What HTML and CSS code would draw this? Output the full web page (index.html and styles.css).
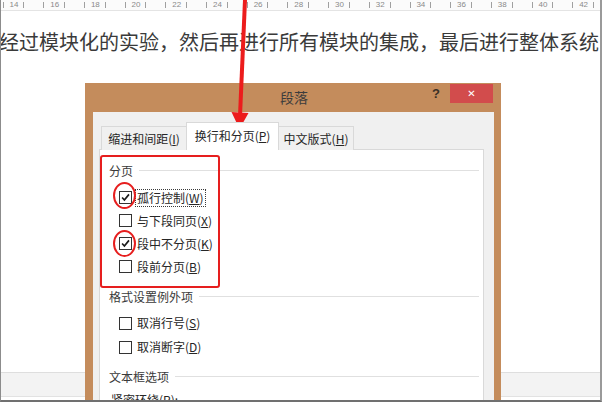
FILE: index.html
```html
<!DOCTYPE html>
<html lang="zh-CN">
<head>
<meta charset="utf-8">
<title>段落</title>
<link rel="stylesheet" href="styles.css">
</head>
<body>
<div class="screen">
  <div class="ruler">
    <div class="ruler-track">
      <span class="mark">14</span><span class="mark">16</span><span class="mark">18</span><span class="mark">20</span><span class="mark">22</span><span class="mark">24</span><span class="mark">26</span><span class="mark">28</span><span class="mark">30</span><span class="mark">32</span><span class="mark">34</span><span class="mark">36</span><span class="mark">38</span><span class="mark">40</span><span class="mark">42</span>
    </div>
  </div>
  <p class="doc-line">经过模块化的实验，然后再进行所有模块的集成，最后进行整体系统</p>
  <div class="doc-spacer"></div>
  <div class="status-band"></div>
  <div class="status-gap"></div>

  <div class="dialog">
    <div class="titlebar">
      <span></span>
      <span class="title">段落</span>
      <span class="controls"><span class="help">?</span><span class="close">✕</span></span>
    </div>
    <div class="client">
      <div class="tabs">
        <div class="tab t1">缩进和间距(<u>I</u>)</div>
        <div class="tab t2 active">换行和分页(<u>P</u>)</div>
        <div class="tab t3">中文版式(<u>H</u>)</div>
      </div>
      <div class="panel">
        <div class="section s1">
          <div class="sec-head"><span>分页</span><i class="rule"></i></div>
          <div class="row"><span class="box"><svg viewBox="0 0 13 13" class="tick"><path d="M2.5 6.5 L5.2 9.4 L10.6 2.8"/></svg></span><span class="lbl focus">孤行控制(<u>W</u>)</span></div>
          <div class="row"><span class="box"></span><span class="lbl">与下段同页(<u>X</u>)</span></div>
          <div class="row"><span class="box"><svg viewBox="0 0 13 13" class="tick"><path d="M2.5 6.5 L5.2 9.4 L10.6 2.8"/></svg></span><span class="lbl">段中不分页(<u>K</u>)</span></div>
          <div class="row"><span class="box"></span><span class="lbl">段前分页(<u>B</u>)</span></div>
        </div>
        <div class="section s2">
          <div class="sec-head"><span>格式设置例外项</span><i class="rule"></i></div>
          <div class="row tall"><span class="box"></span><span class="lbl">取消行号(<u>S</u>)</span></div>
          <div class="row tall"><span class="box"></span><span class="lbl">取消断字(<u>D</u>)</span></div>
        </div>
        <div class="section s3">
          <div class="sec-head"><span>文本框选项</span><i class="rule"></i></div>
          <div class="row sub"><span class="lbl">紧密环绕(<u>R</u>):</span></div>
        </div>
      </div>
    </div>
  </div>

  <div class="mark-rect"></div>
  <div class="mark-ring r1"></div>
  <div class="mark-ring r2"></div>
  <svg class="arrow" viewBox="0 0 602 402" width="602" height="402">
    <path d="M244 0 L239 116" stroke="#ec1c1c" stroke-width="4" fill="none"/>
    <polygon points="230.5,112 247.5,113 238.5,129" fill="#ec1c1c"/>
  </svg>
</div>
</body>
</html>
```
FILE: styles.css
```css
* { box-sizing: border-box; }
html, body { margin: 0; padding: 0; }
body {
  width: 602px;
  height: 402px;
  overflow: hidden;
  background: #ffffff;
  font-family: "Noto Sans CJK SC", "Noto Sans", sans-serif;
}
.screen {
  position: relative;
  width: 602px;
  height: 402px;
  display: flex;
  flex-direction: column;
  border-left: 1px solid #8c8c8c;
  border-right: 2px solid #9a9a9a;
  border-bottom: 2px solid #707070;
  overflow: hidden;
}
.ruler {
  height: 11px;
  flex: none;
  background: #fbfbfb;
  border-bottom: 1px solid #e4e4e4;
}
.ruler-track {
  display: flex;
  margin-left: -7.35px;
}
.mark {
  flex: none;
  width: 40.7px;
  text-align: center;
  font-family: "Liberation Sans", sans-serif;
  font-size: 8px;
  line-height: 10px;
  color: #8a8a8a;
  position: relative;
}
.mark::before, .mark::after {
  content: "";
  position: absolute;
  top: 2px;
  width: 1px;
  height: 6px;
  background: #a0a0a0;
}
.mark::before { left: 9px; }
.mark::after { right: 10px; }
.doc-line {
  margin: 17px 0 0 -2px;
  flex: none;
  font-size: 20px;
  line-height: 28px;
  color: #3a3a3a;
  white-space: nowrap;
  letter-spacing: 0;
}
.doc-spacer { flex: 1; }
.status-band {
  flex: none;
  height: 25px;
  background: #f3f3f3;
  border-top: 1px solid #dedede;
  border-bottom: 1px solid #e2e2e2;
}
.status-gap { flex: none; height: 3px; }

/* dialog window */
.dialog {
  position: absolute;
  left: 84px;
  top: 83px;
  width: 416px;
  height: 330px;
  background: #c48c5c;
  display: flex;
  flex-direction: column;
}
.titlebar {
  height: 29px;
  flex: none;
  display: grid;
  grid-template-columns: 1fr auto 1fr;
  align-items: start;
}
.title {
  font-size: 14px;
  line-height: 28px;
  color: #3c3c3c;
  padding-left: 2px;
}
.controls {
  justify-self: end;
  display: flex;
  align-items: flex-start;
  padding-right: 8px;
  padding-top: 1px;
}
.help {
  font-family: "Liberation Sans", sans-serif;
  font-weight: bold;
  font-size: 13px;
  line-height: 19px;
  color: #3a3026;
  margin-right: 10px;
}
.close {
  width: 43px;
  height: 19px;
  background: #d24c4c;
  color: #ffffff;
  font-family: "DejaVu Sans", sans-serif;
  font-weight: bold;
  font-size: 10px;
  line-height: 19px;
  text-align: center;
}
.client {
  flex: 1;
  margin: 0 7px 0 8px;
  background: #f0f0f0;
  padding: 10px 10px 0 6px;
  display: flex;
  flex-direction: column;
}
.tabs {
  display: flex;
  align-items: flex-end;
  padding-left: 2px;
  height: 28px;
  margin-bottom: -1px;
  position: relative;
  z-index: 1;
}
.tab {
  height: 24px;
  font-size: 12px;
  line-height: 23px;
  color: #262626;
  text-align: center;
  background: #f0f0f0;
  border: 1px solid #d9d9d9;
  border-bottom: none;
}
.tab.t1 { width: 85px; border-right: none; }
.tab.t2 { width: 93px; }
.tab.t3 { width: 75px; border-left: none; }
.tab.active {
  height: 28px;
  background: #ffffff;
  line-height: 26px;
}
.tab u, .lbl u { text-underline-offset: 1px; }
.panel {
  flex: 1;
  background: #ffffff;
  border: 1px solid #d9d9d9;
  padding: 11px 4px 0 9px;
}
.sec-head {
  display: flex;
  align-items: center;
  height: 18px;
  font-size: 12px;
  color: #3a3a3a;
  margin-bottom: 7px;
}
.rule {
  flex: 1;
  height: 1px;
  background: #e0e0e0;
  margin-left: 6px;
}
.section.s1 { margin-bottom: 9px; }
.section.s2 .sec-head { margin-bottom: 6px; }
.section.s2 { margin-bottom: 8px; }
.row {
  display: flex;
  align-items: center;
  height: 23px;
  padding-left: 10px;
  font-size: 12px;
  color: #262626;
}
.row.tall { height: 24px; }
.row.sub { padding-left: 0; height: 20px; margin-top: -2px; }
.box {
  width: 13px;
  height: 13px;
  flex: none;
  border: 1px solid #333333;
  background: #ffffff;
  margin-right: 3px;
  display: flex;
}
.tick {
  width: 11px;
  height: 11px;
}
.tick path {
  fill: none;
  stroke: #1a1a1a;
  stroke-width: 2;
}
.lbl {
  line-height: 16px;
  padding: 0 1px;
  border: 1px solid transparent;
}
.lbl.focus { border: 1px dotted #3a3a3a; }

/* annotations */
.mark-rect {
  position: absolute;
  left: 99px;
  top: 155px;
  width: 120px;
  height: 133px;
  border: 2px solid #e61e1e;
  border-radius: 3px;
}
.mark-ring {
  position: absolute;
  width: 23px;
  height: 27px;
  border: 2px solid #e61e1e;
  border-radius: 50%;
}
.mark-ring.r1 { left: 112px; top: 182px; }
.mark-ring.r2 { left: 112px; top: 230px; }
.arrow {
  position: absolute;
  left: 0;
  top: 0;
  pointer-events: none;
}
```
